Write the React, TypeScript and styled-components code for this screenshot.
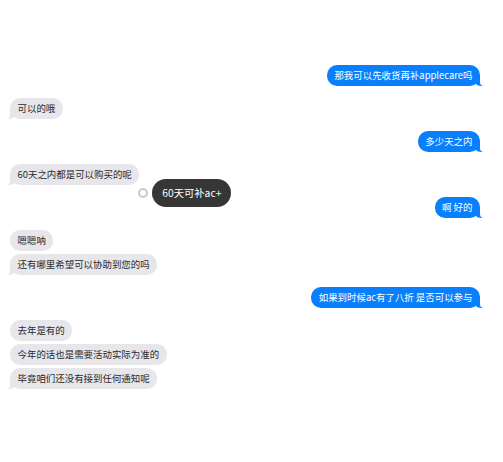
import styled, { createGlobalStyle, css } from "styled-components";

const GlobalStyle = createGlobalStyle`
  body {
    margin: 0;
    background: #ffffff;
    font-family: "Noto Sans CJK SC", "Noto Sans", sans-serif;
  }
`;

const Thread = styled.div`
  width: 503px;
  height: 462px;
  box-sizing: border-box;
  padding: 65px 23px 0 10px;
  display: flex;
  flex-direction: column;
  gap: 12px;
`;

const Group = styled.div<{ $mine?: boolean }>`
  display: flex;
  flex-direction: column;
  align-items: ${(p) => (p.$mine ? "flex-end" : "flex-start")};
  gap: 3px;
`;

const BLUE = "#0a7ffb";
const GREY = "#e6e6eb";

const tailMine = css`
  &::before {
    content: "";
    position: absolute;
    bottom: 0;
    right: -3px;
    width: 9px;
    height: 10px;
    background: ${BLUE};
    border-bottom-left-radius: 7px 6px;
  }
  &::after {
    content: "";
    position: absolute;
    bottom: 0;
    right: -10px;
    width: 10px;
    height: 10px;
    background: #ffffff;
    border-bottom-left-radius: 4px;
  }
`;

const tailTheirs = css`
  &::before {
    content: "";
    position: absolute;
    bottom: 0;
    left: -3px;
    width: 9px;
    height: 10px;
    background: ${GREY};
    border-bottom-right-radius: 7px 6px;
  }
  &::after {
    content: "";
    position: absolute;
    bottom: 0;
    left: -10px;
    width: 10px;
    height: 10px;
    background: #ffffff;
    border-bottom-right-radius: 4px;
  }
`;

const Bubble = styled.div<{ $mine?: boolean; $tail?: boolean }>`
  position: relative;
  box-sizing: border-box;
  height: 21px;
  padding: 4px 7.5px;
  border-radius: 10px;
  font-size: 9.45px;
  line-height: 13px;
  white-space: nowrap;
  background: ${(p) => (p.$mine ? BLUE : GREY)};
  color: ${(p) => (p.$mine ? "#ffffff" : "#2b2b2b")};
  ${(p) => p.$tail && (p.$mine ? tailMine : tailTheirs)}
`;

const Annotation = styled.div`
  position: absolute;
  left: calc(100% - 1px);
  top: 15px;
  display: flex;
  align-items: center;
  gap: 4px;
  z-index: 2;
`;

const Dot = styled.span`
  width: 6px;
  height: 6px;
  border-radius: 50%;
  border: 2.5px solid #c9c9cc;
  background: #ffffff;
`;

const Pill = styled.div`
  height: 28px;
  padding: 0 10px;
  border-radius: 14px;
  background: #363636;
  color: #ffffff;
  font-size: 10.3px;
  line-height: 28px;
  white-space: nowrap;
`;

type Msg = { text: string; note?: string };
type Turn = { mine: boolean; messages: Msg[] };

const turns: Turn[] = [
  { mine: true, messages: [{ text: "那我可以先收货再补applecare吗" }] },
  { mine: false, messages: [{ text: "可以的哦" }] },
  { mine: true, messages: [{ text: "多少天之内" }] },
  { mine: false, messages: [{ text: "60天之内都是可以购买的呢", note: "60天可补ac+" }] },
  { mine: true, messages: [{ text: "啊 好的" }] },
  { mine: false, messages: [{ text: "嗯嗯呐" }, { text: "还有哪里希望可以协助到您的吗" }] },
  { mine: true, messages: [{ text: "如果到时候ac有了八折 是否可以参与" }] },
  {
    mine: false,
    messages: [
      { text: "去年是有的" },
      { text: "今年的话也是需要活动实际为准的" },
      { text: "毕竟咱们还没有接到任何通知呢" },
    ],
  },
];

const App = () => {
  return (
    <>
      <GlobalStyle />
      <Thread>
        {turns.map((turn, i) => (
          <Group key={i} $mine={turn.mine}>
            {turn.messages.map((m, j) => (
              <Bubble key={j} $mine={turn.mine} $tail={j === turn.messages.length - 1}>
                {m.text}
                {m.note ? (
                  <Annotation>
                    <Dot />
                    <Pill>{m.note}</Pill>
                  </Annotation>
                ) : null}
              </Bubble>
            ))}
          </Group>
        ))}
      </Thread>
    </>
  );
};

export default App;
